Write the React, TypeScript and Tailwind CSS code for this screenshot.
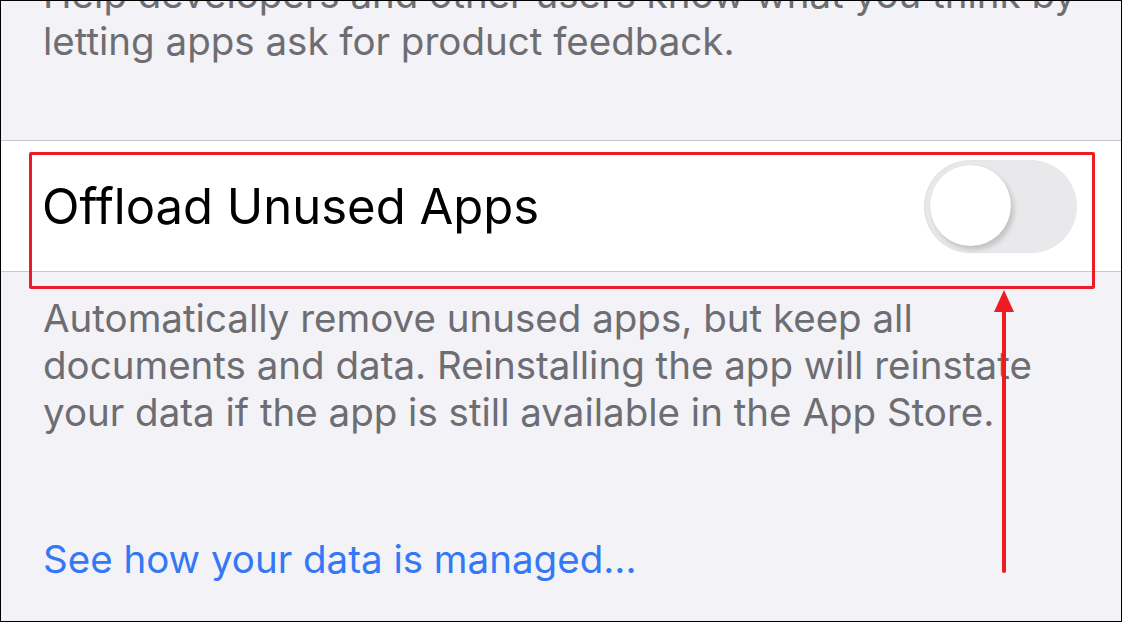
import React from "react";

const Toggle = () => {
  return (
    <div className="relative w-[153px] h-[93px] rounded-full bg-[#e9e9eb] shadow-[inset_1px_0_2px_rgba(0,0,0,0.06)]">
      <div className="absolute left-[6px] top-[5px] w-[81px] h-[81px] rounded-full bg-white shadow-[3px_4px_5px_rgba(0,0,0,0.16),0_0_1px_rgba(0,0,0,0.12)]" />
    </div>
  );
};

export default function App() {
  return (
    <div
      className="relative w-[1122px] h-[622px] overflow-hidden border border-black bg-[#f2f2f7]"
      style={{ fontFamily: "Inter, Roboto, 'Liberation Sans', sans-serif" }}
    >
      {/* footer of the previous group */}
      <div className="mt-[-30px] pl-[42px] pr-[40px] text-[38.5px] leading-[47px] text-[#6d6d72]">
        <p className="whitespace-nowrap">Help developers and other users know what you think by</p>
        <p className="whitespace-nowrap">letting apps ask for product feedback.</p>
      </div>

      {/* the cell */}
      <div className="mt-[75px] flex h-[132px] items-center justify-between border-y border-[#c8c7cc] bg-white pl-[41px] pr-[44px]">
        <span className="pt-[2px] text-[49px] leading-[52px] text-black">Offload Unused Apps</span>
        <Toggle />
      </div>

      <div className="mt-[23px] pl-[42px] text-[38.5px] leading-[47px] text-[#6d6d72]">
        <p className="whitespace-nowrap">Automatically remove unused apps, but keep all</p>
        <p className="whitespace-nowrap">documents and data. Reinstalling the app will reinstate</p>
        <p className="whitespace-nowrap">your data if the app is still available in the App Store.</p>
      </div>

      <div className="mt-[100px] pl-[42px] text-[38.5px] leading-[47px] text-[#3478f6]">
        <p className="whitespace-nowrap">See how your data is managed...</p>
      </div>

      {/* annotation */}
      <div className="absolute left-[28px] top-[151px] w-[1066px] h-[137px] rounded-[2px] border-[3px] border-[#ed1c24]" />
      <svg className="absolute left-[990px] top-[286px]" width="26" height="290" viewBox="0 0 26 290">
        <line x1="13" y1="20" x2="13" y2="284" stroke="#ed1c24" strokeWidth="4" strokeLinecap="round" />
        <polygon points="13,3 3,25 23,25" fill="#ed1c24" />
      </svg>
    </div>
  );
}
